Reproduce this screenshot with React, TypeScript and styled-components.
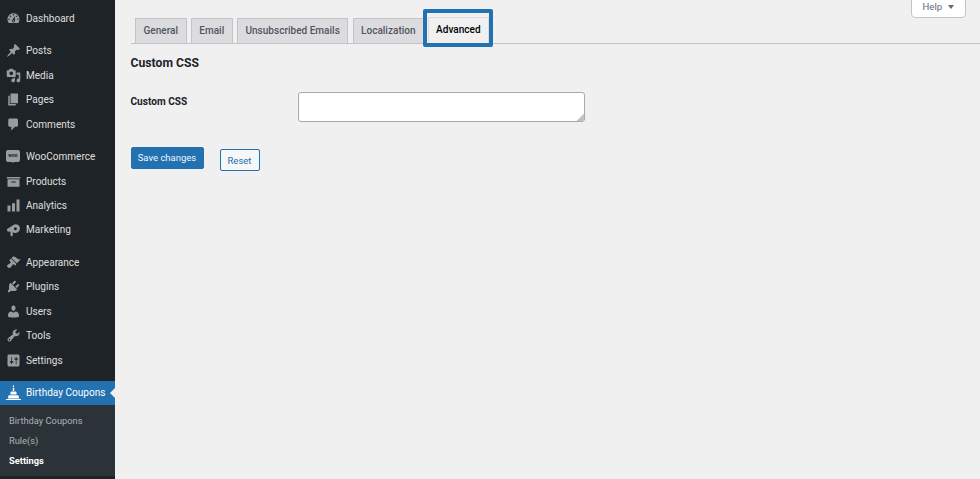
import React from "react";
import styled, { createGlobalStyle } from "styled-components";

const GlobalStyle = createGlobalStyle`
  html, body {
    margin: 0;
    padding: 0;
    height: 100%;
    overflow: hidden;
    background: #f0f0f1;
    font-family: Roboto, "Liberation Sans", sans-serif;
  }
`;

const icons: Record<string, string> = {
  dashboard:
    "M3.76 16h12.48c1.1-1.37 1.76-3.11 1.76-5 0-4.42-3.58-8-8-8s-8 3.58-8 8c0 1.89.66 3.63 1.76 5zM10 4c.55 0 1 .45 1 1s-.45 1-1 1-1-.45-1-1 .45-1 1-1zM6 6c.55 0 1 .45 1 1s-.45 1-1 1-1-.45-1-1 .45-1 1-1zm8 0c.55 0 1 .45 1 1s-.45 1-1 1-1-.45-1-1 .45-1 1-1zm-5.37 5.55L12 7v6c0 1.1-.9 2-2 2s-2-.9-2-2c0-.57.24-1.08.63-1.45zM4 10c.55 0 1 .45 1 1s-.45 1-1 1-1-.45-1-1 .45-1 1-1zm12 0c.55 0 1 .45 1 1s-.45 1-1 1-1-.45-1-1 .45-1 1-1zm-5 3c0-.55-.45-1-1-1s-1 .45-1 1 .45 1 1 1 1-.45 1-1z",
  posts:
    "M10.44 3.02l1.82-1.82 6.36 6.35-1.83 1.82c-1.05-.68-2.48-.57-3.41.36l-.75.75c-.92.93-1.04 2.35-.35 3.41l-1.83 1.82-2.41-2.41-2.8 2.79c-.42.42-3.38 2.71-3.8 2.29s1.86-3.39 2.28-3.81l2.79-2.79L4.1 9.36l1.83-1.82c1.05.69 2.48.57 3.4-.36l.75-.75c.93-.92 1.05-2.35.36-3.41z",
  media:
    "M13 11V4c0-.55-.45-1-1-1h-1.67L9 1H5L3.67 3H2c-.55 0-1 .45-1 1v7c0 .55.45 1 1 1h10c.55 0 1-.45 1-1zM7 4.5c1.38 0 2.5 1.12 2.5 2.5S8.38 9.5 7 9.5 4.5 8.38 4.5 7 5.62 4.5 7 4.5zM14 6h5v10.5c0 1.38-1.12 2.5-2.5 2.5S14 17.88 14 16.5s1.12-2.5 2.5-2.5c.17 0 .34.02.5.05V9h-3V6zm-4 8.05V13h2v3.5c0 1.38-1.12 2.5-2.5 2.5S7 17.88 7 16.5 8.12 14 9.5 14c.17 0 .34.02.5.05z",
  pages: "M6 15V2h10v13H6zm-1 1h8v2H3V5h2v11z",
  comments:
    "M5 2h9c1.1 0 2 .9 2 2v7c0 1.1-.9 2-2 2h-2l-5 5v-5H5c-1.1 0-2-.9-2-2V4c0-1.1.9-2 2-2z",
  products: "M19 4v2H1V4h18zM2 7h16v10H2V7zm11 3H7v1.200h6V10z",
  analytics: "M18 18V2h-4v16h4zm-6 0V7H8v11h4zm-6 0v-8H2v8h4z",
  marketing:
    "M1 9.500L11 3.200a5.800 5.800 0 1 1 1.500 11.300c-.6 0-1.200-.1-1.700-.3L9 13.700V17.500c0 .8-.7 1.500-1.500 1.500S6 18.300 6 17.500v-4.500L2 12.500zM12.500 7a2 2 0 1 0 0 4 2 2 0 0 0 0-4z",
  appearance:
    "M14.48 11.06L7.41 3.99l1.5-1.5c.5-.56 2.3-.47 3.51.32 1.21.8 1.43 1.28 2.91 2.1 1.18.64 2.45 1.26 4.45.85zm-.71.71L6.7 4.7 4.93 6.47c-.39.39-.39 1.02 0 1.41l1.06 1.06c.39.39.39 1.03 0 1.42-.6.6-1.43 1.11-2.21 1.69-.35.26-.7.53-1.01.84C1.43 13.23.93 14.1 1.4 15.03c.49.97 1.19 1.71 2.2 2.2.93.47 1.77-.05 3.1-1.36.3-.3.58-.66.84-1.01.58-.78 1.09-1.61 1.69-2.21.39-.39 1.03-.39 1.42 0l1.06 1.06c.39.39 1.02.39 1.41 0z",
  plugins:
    "M13.11 4.36L9.87 7.6 8 5.73l3.24-3.24c.35-.34 1.05-.2 1.56.32.52.51.66 1.21.31 1.55zm-8 1.77l.91-1.12 9.01 9.01-1.19.84c-.71.71-2.63 1.16-3.82 1.16H6.14L4.9 17.26c-.59.59-1.54.59-2.12 0-.59-.58-.59-1.53 0-2.12l1.24-1.24v-3.88c0-1.13.4-3.19 1.09-3.89zm7.26 3.97l3.24-3.24c.34-.35 1.04-.21 1.55.31.52.51.66 1.21.31 1.55l-3.24 3.25z",
  users:
    "M10 9.25c-2.27 0-2.73-3.44-2.73-3.44C7 4.02 7.82 2 9.97 2c2.16 0 2.98 2.02 2.71 3.81 0 0-.41 3.44-2.68 3.44zm0 2.57L12.72 10c2.39 0 4.52 2.33 4.52 4.53v2.49s-3.65 1.13-7.24 1.13c-3.65 0-7.24-1.13-7.24-1.13v-2.49c0-2.25 1.94-4.48 4.47-4.48z",
  tools:
    "M16.68 9.77c-1.34 1.34-3.3 1.67-4.95.99l-5.41 6.52c-.99.99-2.59.99-3.58 0s-.99-2.59 0-3.57l6.52-5.42c-.68-1.65-.35-3.61.99-4.95 1.28-1.28 3.12-1.62 4.72-1.06l-2.89 2.89 2.82 2.82 2.86-2.87c.53 1.58.18 3.39-1.08 4.67zM3.81 16.21c.4.39 1.04.39 1.43 0 .4-.4.4-1.04 0-1.43-.39-.4-1.03-.4-1.43 0-.39.39-.39 1.03 0 1.43z",
  settings:
    "M18 16V4c0-1.1-.9-2-2-2H4c-1.1 0-2 .9-2 2v12c0 1.1.9 2 2 2h12c1.1 0 2-.9 2-2zM8 11h1c.55 0 1 .45 1 1s-.45 1-1 1H8v1.5c0 .28-.22.5-.5.5s-.5-.22-.5-.5V13H6c-.55 0-1-.45-1-1s.45-1 1-1h1V5.5c0-.28.22-.5.5-.5s.5.22.5.5V11zm5-2h-1c-.55 0-1-.45-1-1s.45-1 1-1h1V5.5c0-.28.22-.5.5-.5s.5.22.5.5V7h1c.55 0 1 .45 1 1s-.45 1-1 1h-1v5.5c0 .28-.22.5-.5.5s-.5-.22-.5-.5V9z",
  cake:
    "M10 0c.5.800 1 1.300 1 1.900 0 .5-.4.900-1 .900s-1-.4-1-.9c0-.6.500-1.100 1-1.900zM9 3.500h2V8H9V3.500zM7 8.500h6c.5 0 1 .5 1 1V12.500H6V9.500c0-.5.500-1 1-1zM3.500 13.500h13l1 4.500H2.500zM0 18.500h20V20H0z",
};

const menuGroups = [
  [{ icon: "dashboard", label: "Dashboard" }],
  [
    { icon: "posts", label: "Posts" },
    { icon: "media", label: "Media" },
    { icon: "pages", label: "Pages" },
    { icon: "comments", label: "Comments" },
  ],
  [
    { icon: "woo", label: "WooCommerce" },
    { icon: "products", label: "Products" },
    { icon: "analytics", label: "Analytics" },
    { icon: "marketing", label: "Marketing" },
  ],
  [
    { icon: "appearance", label: "Appearance" },
    { icon: "plugins", label: "Plugins" },
    { icon: "users", label: "Users" },
    { icon: "tools", label: "Tools" },
    { icon: "settings", label: "Settings" },
  ],
];

const tabs = ["General", "Email", "Unsubscribed Emails", "Localization"];

const MenuIcon = ({ name, active }: { name: string; active?: boolean }) => {
  if (name === "woo") {
    return (
      <WooBadge>
        <span>woo</span>
      </WooBadge>
    );
  }
  return (
    <IconSvg viewBox="0 0 20 20" $active={active}>
      <path d={icons[name]} fillRule="evenodd" />
    </IconSvg>
  );
};

const App = () => {
  return (
    <Page>
      <GlobalStyle />
      <Sidebar>
        {menuGroups.map((group, i) => (
          <MenuGroup key={i}>
            {group.map((item) => (
              <MenuItem key={item.label}>
                <MenuIcon name={item.icon} />
                {item.label}
              </MenuItem>
            ))}
          </MenuGroup>
        ))}
        <CurrentItem>
          <MenuIcon name="cake" active />
          Birthday Coupons
        </CurrentItem>
        <SubMenu>
          <SubItem>Birthday Coupons</SubItem>
          <SubItem>Rule(s)</SubItem>
          <SubItem $current>Settings</SubItem>
        </SubMenu>
      </Sidebar>

      <Content>
        <HelpButton>
          Help <HelpArrow />
        </HelpButton>
        <TabBar>
          {tabs.map((t) => (
            <Tab key={t}>{t}</Tab>
          ))}
          <Highlight>
            <ActiveTab>Advanced</ActiveTab>
          </Highlight>
        </TabBar>

        <Heading>Custom CSS</Heading>
        <FieldRow>
          <FieldLabel>Custom CSS</FieldLabel>
          <TextArea />
        </FieldRow>
        <Actions>
          <SaveButton>Save changes</SaveButton>
          <ResetButton>Reset</ResetButton>
        </Actions>
      </Content>
    </Page>
  );
};

const Page = styled.div`
  display: flex;
  height: 479px;
  width: 980px;
  overflow: hidden;
`;

const Sidebar = styled.nav`
  width: 115px;
  flex-shrink: 0;
  background: #1d2327;
  padding-top: 6px;
  box-sizing: border-box;
`;

const MenuGroup = styled.div`
  margin-bottom: 8.3px;
`;

const MenuItem = styled.div`
  display: flex;
  align-items: center;
  height: 24.4px;
  padding-left: 5.5px;
  font-size: 10.05px;
  color: #f0f0f1;
  opacity: 0.9;
`;

const CurrentItem = styled(MenuItem)`
  position: relative;
  background: #2271b1;
  color: #fff;
  opacity: 1;

  &::after {
    content: "";
    position: absolute;
    right: 0;
    top: 7px;
    border: 5px solid transparent;
    border-right-color: #f0f0f1;
    border-left-width: 0;
  }
`;

const IconSvg = styled.svg<{ $active?: boolean }>`
  width: 15px;
  height: 15px;
  margin-right: 5.5px;
  flex-shrink: 0;
  fill: ${(p) => (p.$active ? "#fff" : "#a7aaad")};
`;

const WooBadge = styled.div`
  position: relative;
  width: 14px;
  height: 12px;
  margin: 0 6px 2px 0.5px;
  flex-shrink: 0;
  border-radius: 2px;
  background: #a7aaad;
  display: flex;
  align-items: center;
  justify-content: center;

  span {
    font-size: 5px;
    font-weight: 700;
    color: #1d2327;
    line-height: 1;
  }

  &::after {
    content: "";
    position: absolute;
    left: 6px;
    top: 12px;
    border: 1.5px solid transparent;
    border-top-color: #a7aaad;
    border-bottom-width: 0;
  }
`;

const SubMenu = styled.div`
  background: #2c3338;
  padding: 5px 0 6px;
`;

const SubItem = styled.div<{ $current?: boolean }>`
  height: 20px;
  display: flex;
  align-items: center;
  padding-left: 9px;
  font-size: 9.3px;
  color: ${(p) => (p.$current ? "#fff" : "rgba(240,246,252,0.65)")};
  font-weight: ${(p) => (p.$current ? 700 : 400)};
`;

const Content = styled.main`
  position: relative;
  flex: 1;
  padding: 0 0 0 15.5px;
`;

const HelpButton = styled.div`
  position: absolute;
  top: -6px;
  right: 14px;
  width: 55px;
  height: 24px;
  box-sizing: border-box;
  padding-top: 6px;
  background: #fff;
  border: 1px solid #c3c4c7;
  border-radius: 0 0 4px 4px;
  font-size: 9.5px;
  color: #646970;
  text-align: center;
`;

const HelpArrow = styled.span`
  display: inline-block;
  margin-left: 4px;
  vertical-align: 1px;
  border: 3px solid transparent;
  border-top: 4px solid #646970;
  border-bottom-width: 0;
`;

const TabBar = styled.div`
  display: flex;
  align-items: flex-end;
  height: 44px;
  box-sizing: border-box;
  padding-left: 4.5px;
  gap: 4.2px;
  border-bottom: 1px solid #c3c4c7;
`;

const Tab = styled.div`
  height: 26px;
  box-sizing: border-box;
  margin-bottom: -1px;
  padding: 0 7.5px 2px;
  display: flex;
  align-items: center;
  border: 1px solid #c3c4c7;
  background: #dcdcde;
  color: #50575e;
  font-size: 10.05px;
  font-weight: 500;
`;

const Highlight = styled.div`
  margin: 0 0 -4px -5.7px;
  padding: 4px 0 0 1px;
  border: 4px solid #2271b1;
  border-radius: 2px;
  height: 38px;
  box-sizing: border-box;
  background: #f0f0f1;
`;

const ActiveTab = styled.div`
  height: 26px;
  box-sizing: border-box;
  padding: 0 7.5px 2px;
  display: flex;
  align-items: center;
  border: 1px solid #dcdcde;
  border-bottom: none;
  background: #f0f0f1;
  color: #000;
  font-size: 10.05px;
  font-weight: 500;
`;

const Heading = styled.h2`
  margin: 12px 0 0;
  font-size: 12.2px;
  line-height: 15px;
  font-weight: 700;
  color: #1d2327;
`;

const FieldRow = styled.div`
  display: flex;
  align-items: flex-start;
  margin-top: 21px;
`;

const FieldLabel = styled.label`
  width: 167.5px;
  padding-top: 3px;
  font-size: 10.1px;
  line-height: 13px;
  font-weight: 700;
  color: #1d2327;
`;

const TextArea = styled.textarea`
  width: 287px;
  height: 30px;
  box-sizing: border-box;
  margin: 0;
  background: #fff;
  border: 1px solid #a7aaad;
  border-radius: 3px;

  &::-webkit-resizer {
    background: linear-gradient(135deg, transparent 50%, #c3c4c7 50%) no-repeat
      right bottom / 7px 7px;
  }
`;

const Actions = styled.div`
  display: flex;
  align-items: flex-start;
  gap: 16px;
  margin-top: 25px;
`;

const SaveButton = styled.button`
  width: 73px;
  height: 21.5px;
  padding: 0;
  background: #2271b1;
  border: 1px solid #2271b1;
  border-radius: 2px;
  color: #f0f6fc;
  font-family: inherit;
  font-size: 9.5px;
`;

const ResetButton = styled.button`
  width: 40px;
  height: 22px;
  margin-top: 2px;
  padding: 0;
  background: #f6f7f7;
  border: 1px solid #2271b1;
  border-radius: 2px;
  color: #2271b1;
  font-family: inherit;
  font-size: 9.5px;
`;

export default App;
